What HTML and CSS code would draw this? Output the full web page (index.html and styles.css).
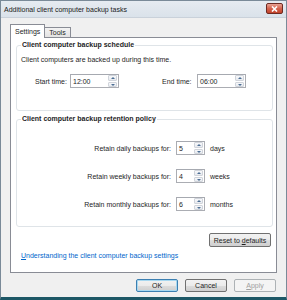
FILE: index.html
```html
<!DOCTYPE html>
<html lang="en">

<head>
  <meta charset="UTF-8">
  <title>Additional client computer backup tasks</title>
  <link rel="stylesheet" href="styles.css">
</head>

<body>
  <div class="window">
    <div class="titlebar">
      <span class="title">Additional client computer backup tasks</span>
      <span class="close-btn">
        <svg width="7" height="6" viewBox="0 0 7 6">
          <path d="M1 0.5 L6 5.5 M6 0.5 L1 5.5" stroke="#fff" stroke-width="1.6" />
        </svg>
      </span>
    </div>

    <div class="body">
      <div class="tabs">
        <div class="tab active">Settings</div>
        <div class="tab">Tools</div>
      </div>

      <div class="panel">
        <fieldset class="group">
          <legend>Client computer backup schedule</legend>
          <p class="note">Client computers are backed up during this time.</p>
          <div class="time-row">
            <label class="time-label">Start time:</label>
            <div class="spin time-spin"><span class="spin-value">12:00</span><span class="spin-btns"><i class="up"></i><i class="down"></i></span></div>
            <label class="time-label end-label">End time:</label>
            <div class="spin time-spin"><span class="spin-value">06:00</span><span class="spin-btns"><i class="up"></i><i class="down"></i></span></div>
          </div>
        </fieldset>

        <fieldset class="group retention">
          <legend>Client computer backup retention policy</legend>
          <div class="retain-row first">
            <label class="retain-label">Retain daily backups for:</label>
            <div class="spin small-spin"><span class="spin-value">5</span><span class="spin-btns"><i class="up"></i><i class="down"></i></span></div>
            <span class="unit">days</span>
          </div>
          <div class="retain-row">
            <label class="retain-label">Retain weekly backups for:</label>
            <div class="spin small-spin"><span class="spin-value">4</span><span class="spin-btns"><i class="up"></i><i class="down"></i></span></div>
            <span class="unit">weeks</span>
          </div>
          <div class="retain-row">
            <label class="retain-label">Retain monthly backups for:</label>
            <div class="spin small-spin"><span class="spin-value">6</span><span class="spin-btns"><i class="up"></i><i class="down"></i></span></div>
            <span class="unit">months</span>
          </div>
        </fieldset>

        <div class="reset-row">
          <button class="btn reset-btn">Reset to <u>d</u>efaults</button>
        </div>

        <a class="help-link" href="#"><u>U</u>nderstanding the client computer backup settings</a>
      </div>

      <div class="dialog-buttons">
        <button class="btn default-btn">OK</button>
        <button class="btn">Cancel</button>
        <button class="btn disabled-btn"><u>A</u>pply</button>
      </div>
    </div>
  </div>
</body>

</html>
```

FILE: styles.css
```css
* {
  margin: 0;
  padding: 0;
  box-sizing: border-box;
  font-family: "Liberation Sans", Arial, sans-serif;
}

body {
  background-color: #fff;
}

.window {
  width: 287px;
  height: 300px;
  background-color: #f0f0f0;
  border: 1px solid #7a8a98;
  border-bottom: 3px solid #1d5766;
  display: flex;
  flex-direction: column;
  font-size: 7px;
  color: #1e1e1e;
  white-space: nowrap;
}

.titlebar {
  height: 17px;
  display: flex;
  align-items: center;
  justify-content: space-between;
  padding: 0 3px 0 3px;
  background: linear-gradient(#e6ebf1, #dae2ea);
  border-bottom: 1px solid #c9d1da;
}

.title {
  font-size: 7px;
  color: #1a1a1a;
}

.close-btn {
  width: 17px;
  height: 11px;
  margin-top: -1px;
  border: 1px solid #6d2a22;
  border-radius: 2px;
  background: linear-gradient(#e9a394, #d4634e 50%, #c2432b);
  display: flex;
  align-items: center;
  justify-content: center;
}

.body {
  flex: 1;
  padding: 5px 9px 0 9px;
  display: flex;
  flex-direction: column;
}

.tabs {
  display: flex;
  align-items: flex-end;
  height: 14px;
  position: relative;
  z-index: 1;
}

.tab {
  height: 10px;
  padding: 0 4px;
  border: 1px solid #898c95;
  border-bottom: none;
  background: linear-gradient(#f3f3f3, #e3e3e3);
  display: flex;
  align-items: center;
  margin-left: -1px;
}

.tab.active {
  height: 14px;
  margin-left: 0;
  margin-bottom: -1px;
  padding: 0 4px 1px 4px;
  background-color: #fff;
  background-image: none;
}

.panel {
  height: 236px;
  background-color: #fff;
  border: 1px solid #898c95;
  padding: 2px 3px 0 5px;
  display: flex;
  flex-direction: column;
}

.group {
  border: 1px solid #dfe4e8;
  border-radius: 3px;
  padding: 0 4px 0 4px;
}

.group legend {
  font-weight: bold;
  padding: 0 1px;
  line-height: 10px;
}

.note {
  margin-top: 5px;
  line-height: 10px;
}

.time-row {
  display: flex;
  align-items: center;
  margin: 9px 0 22px 14px;
}

.time-label {
  width: 35px;
}

.end-label {
  margin-left: 43px;
}

.spin {
  height: 14px;
  border: 1px solid #abadb3;
  border-top-color: #a6a9b0;
  background-color: #fff;
  display: flex;
  align-items: center;
  justify-content: space-between;
  padding-left: 2px;
}

.time-spin {
  width: 49px;
}

.small-spin {
  width: 29px;
}

.spin-btns {
  width: 9px;
  height: 12px;
  margin-right: 1px;
  display: flex;
  flex-direction: column;
  gap: 1px;
}

.spin-btns i {
  flex: 1;
  border: 1px solid #d0d4db;
  border-radius: 1px;
  background: linear-gradient(#f7f8fa, #e7eaef);
  position: relative;
}

.spin-btns i::after {
  content: "";
  position: absolute;
  left: 2px;
  top: 1px;
  border-left: 2px solid transparent;
  border-right: 2px solid transparent;
}

.spin-btns .up::after {
  border-bottom: 2px solid #4c6e94;
}

.spin-btns .down::after {
  border-top: 2px solid #4c6e94;
}

.retention {
  margin-top: 3px;
  padding-bottom: 15px;
}

.retain-row {
  display: flex;
  align-items: center;
  margin-top: 14px;
}

.retain-row.first {
  margin-top: 17px;
}

.retain-label {
  width: 150px;
  text-align: right;
  margin-right: 5px;
}

.unit {
  margin-left: 5px;
}

.reset-row {
  display: flex;
  justify-content: flex-end;
  margin-top: 6px;
  padding-right: 2px;
}

.btn {
  height: 13px;
  width: 42px;
  font-size: 7px;
  color: #1e1e1e;
  border: 1px solid #707070;
  border-radius: 2px;
  background: linear-gradient(#f2f2f2 0%, #ebebeb 50%, #dddddd 51%, #cfcfcf 100%);
  display: flex;
  align-items: center;
  justify-content: center;
  white-space: pre;
}

.reset-btn {
  width: 62px;
  height: 14px;
}

.help-link {
  color: #0066cc;
  text-decoration: none;
  margin: 4px 0 0 5px;
  line-height: 10px;
}

.dialog-buttons {
  display: flex;
  justify-content: flex-end;
  gap: 7px;
  margin-top: 6px;
  padding-right: 1px;
}

.default-btn {
  border-color: #3c7fb1;
  box-shadow: inset 0 0 0 1px #a8d8f0;
}

.disabled-btn {
  color: #a0a0a0;
  border-color: #adb2b5;
  background: #f4f4f4;
}
```
